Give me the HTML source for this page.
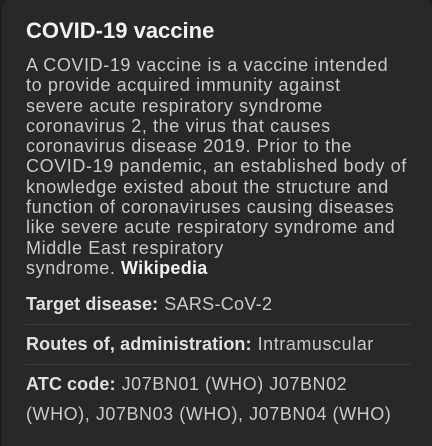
<!DOCTYPE html>
<html><head><style>
html,body{margin:0;padding:0;background:#1e1e1e;width:432px;height:446px;overflow:hidden}
.card{position:absolute;left:2px;top:0;width:430px;height:446px;background:#282828;border-radius:8px 8px 0 0}
body{font-family:"Liberation Sans",sans-serif}
.t{position:absolute;left:26px;top:18px;font-size:22px;font-weight:bold;color:#f2f2f2;white-space:nowrap}
.d{position:absolute;left:26px;top:55px;font-size:18px;line-height:20.3px;color:#c9c9c9;white-space:nowrap;letter-spacing:0.6px}
.d b{color:#f2f2f2;letter-spacing:0.3px}
.r{position:absolute;left:26px;font-size:18px;color:#c9c9c9;white-space:nowrap;letter-spacing:0.3px}
.r b{color:#e0e0e0;margin-right:6px;letter-spacing:0.1px}
.hr{position:absolute;left:25px;width:386px;height:1px;background:#3a3a3a}
</style></head><body>
<div class="card"></div>
<div class="t">COVID-19 vaccine</div>
<div class="d">A COVID-19 vaccine is a vaccine intended<br>to provide acquired immunity against<br>severe acute respiratory syndrome<br>coronavirus 2, the virus that causes<br>coronavirus disease 2019. Prior to the<br>COVID-19 pandemic, an established body of<br>knowledge existed about the structure and<br>function of coronaviruses causing diseases<br>like severe acute respiratory syndrome and<br>Middle East respiratory<br>syndrome. <b>Wikipedia</b></div>
<div class="r" style="top:294px"><b>Target disease:</b>SARS-CoV-2</div>
<div class="hr" style="top:324px"></div>
<div class="r" style="top:334px;letter-spacing:0.55px"><b>Routes of, administration:</b>Intramuscular</div>
<div class="hr" style="top:364px"></div>
<div class="r" style="line-height:30px;top:369px;letter-spacing:0.55px"><b>ATC code:</b>J07BN01 (WHO) J07BN02<br>(WHO), J07BN03 (WHO), J07BN04 (WHO)</div>
</body></html>
